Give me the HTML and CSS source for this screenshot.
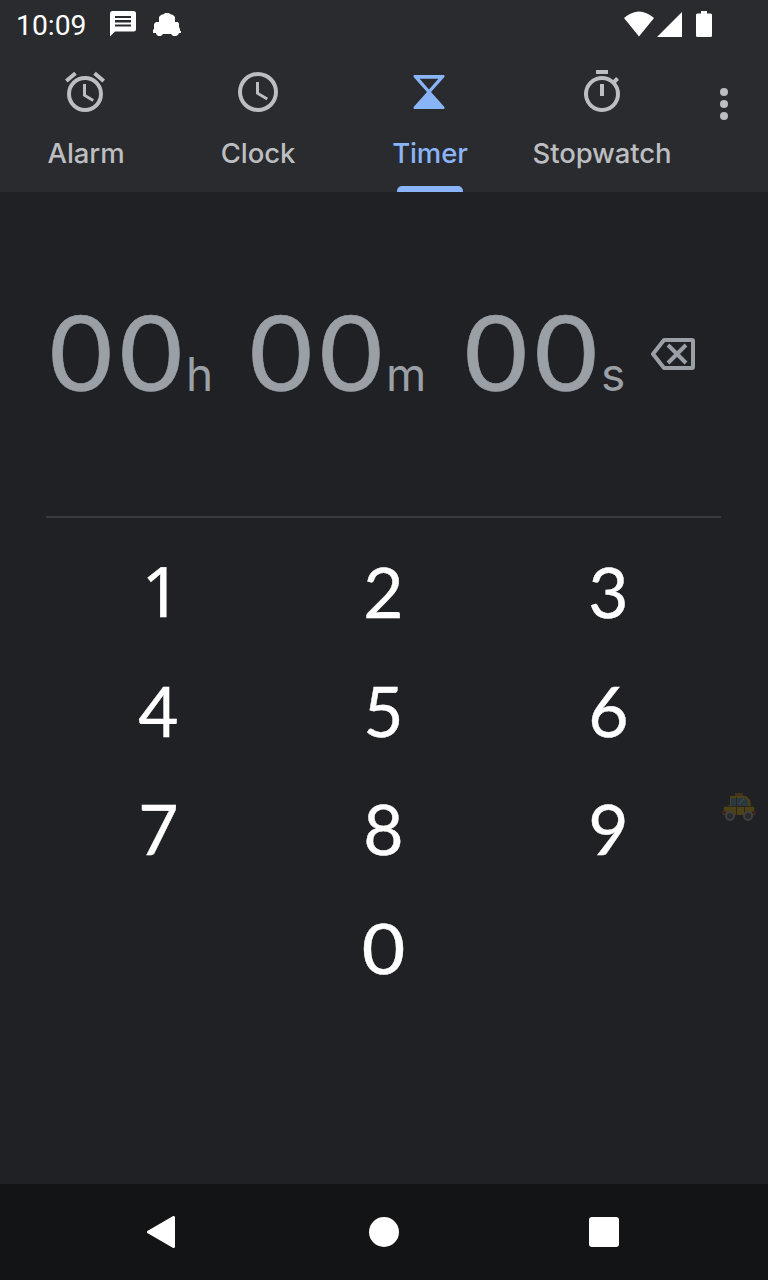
FILE: index.html
```html
<!DOCTYPE html>
<html lang="en">
<head>
<meta charset="utf-8">
<title>Clock</title>
<link rel="stylesheet" href="styles.css">
</head>
<body>
<div class="screen">
  <header class="status">
    <span class="time">10:09</span>
    <svg class="chat" width="26" height="26" viewBox="0 0 26 26"><path fill="#fff" fill-rule="evenodd" d="M2.500 0h21a2.500 2.500 0 0 1 2.500 2.500v15.500a2.500 2.500 0 0 1-2.500 2.500H5L0 25.500V2.500A2.500 2.500 0 0 1 2.500 0zM5 5v2h16V5zM5 9v2.500h16V9zM5 13.500v2h16v-2z"/></svg>
    <svg class="car" width="28" height="23" viewBox="0 0 28 23"><path fill="#fff" d="M11 1L12 0H16L17 1L20 2L22 4V9H25L26 11V14L27 16V18H28V20H26L25 22L23 23H20L18 21H10L8 23H5L3 21V20H0V17L1 16V11L3 9H6V4L8 2L11 1z"/></svg>
    <span class="grow"></span>
    <svg class="signals" width="90" height="26" viewBox="0 0 90 26" fill="#fff"><path d="M0 7Q15-6 30 7L15 25.500zM58 1v25H33zM72 4q0-1.500 1.500-1.500H77V0h6v2.500h3.500Q88 2.500 88 4v20.500q0 1.500-1.500 1.500h-13Q72 26 72 24.500z"/></svg>
  </header>
  <nav class="tabs">
    <div class="tab">
      <svg class="icon nudge" viewBox="0 0 24 24"><path d="M22 5.720l-4.600-3.860-1.290 1.530 4.600 3.860L22 5.720zM7.880 3.390L6.600 1.860 2 5.710l1.290 1.530 4.590-3.850zM12.500 8H11v6l4.750 2.850.750-1.230-4-2.370V8zM12 4a9 9 0 1 0 0 18 9 9 0 0 0 0-18zm0 16a7 7 0 1 1 0-14 7 7 0 0 1 0 14z"/></svg>
      <span class="label">Alarm</span>
    </div>
    <div class="tab">
      <svg class="icon" viewBox="0 0 24 24"><path d="M12 2a10 10 0 1 0 0 20 10 10 0 0 0 0-20zm0 18a8 8 0 1 1 0-16 8 8 0 0 1 0 16zM12.500 7H11v6l5.250 3.150.750-1.230-4.500-2.670z"/></svg>
      <span class="label">Clock</span>
    </div>
    <div class="tab active">
      <svg class="icon nudge" viewBox="0 0 24 24"><path fill-rule="evenodd" d="M4.300 3.500h15.400v1L13 12l6.700 7.500v1H4.300v-1L11 12 4.300 4.500zM7.300 5.400L12 10.700l4.700-5.300z"/></svg>
      <span class="label">Timer</span>
      <span class="indicator"></span>
    </div>
    <div class="tab">
      <svg class="icon" viewBox="0 0 24 24"><path d="M15 1H9v2h6V1zm-4 13h2V8h-2v6zm8.030-6.610l1.420-1.420c-.43-.51-.9-.99-1.410-1.410l-1.420 1.420A9 9 0 1 0 19.030 7.390zM12 20a7 7 0 1 1 0-14 7 7 0 0 1 0 14z"/></svg>
      <span class="label">Stopwatch</span>
    </div>
    <div class="more"><i></i><i></i><i></i></div>
  </nav>
  <main class="content">
    <section class="duration">
      <div class="part hours"><span class="digit">0</span><span class="digit">0</span><span class="unit">h</span></div>
      <div class="part minutes"><span class="digit">0</span><span class="digit">0</span><span class="unit">m</span></div>
      <div class="part seconds"><span class="digit">0</span><span class="digit">0</span><span class="unit">s</span></div>
      <svg class="erase" width="46" height="32" viewBox="0 0 46 32" fill="none" stroke="#9aa0a6" stroke-width="4"><path stroke-linejoin="round" d="M13 2h28a1 1 0 0 1 1 1v26a1 1 0 0 1-1 1H13L2 16z"/><path d="M17 7l18 18M35 7l-18 18"/></svg>
    </section>
    <section class="keypad">
      <span class="key one">1</span><span class="key">2</span><span class="key">3</span>
      <span class="key">4</span><span class="key">5</span><span class="key">6</span>
      <span class="key">7</span><span class="key">8</span><span class="key">9</span>
      <span class="key zero">0</span>
    </section>
  </main>
  <footer class="navbar">
    <svg width="28" height="32" viewBox="0 0 28 32"><path fill="#fff" stroke="#fff" stroke-width="3" stroke-linejoin="round" d="M1.500 16L26.500 1.500v29z"/></svg>
    <span class="home"></span>
    <span class="recent"></span>
  </footer>
  <svg class="taxi" width="34" height="28" viewBox="0 0 34 28">
    <path fill="#42331f" d="M13 0h8v3h-8z"/>
    <path fill="#4d4118" d="M8 3h16l4 4 1 6 3 1 1 8H1l1-8 6-2z"/>
    <path fill="#2a393f" d="M9 5h5v8H9zM15 5h8l3 4v4H15z"/>
    <path stroke="#3b565d" d="M17 11l5-5"/>
    <path stroke="#2b271d" d="M1 13.500h31M14.500 4v18M22.500 14v8"/>
    <path fill="#402226" d="M30 18h4v3h-4zM0 18h4v3H0z"/>
    <g fill="#292b2d" stroke="#3e4042" stroke-width="2"><circle cx="8" cy="23" r="4"/><circle cx="26" cy="23" r="4"/></g>
  </svg>
</div>
</body>
</html>
```
FILE: styles.css
```css
* { box-sizing: border-box; }
body { margin: 0; background: #202124; }
.screen {
  position: relative;
  width: 768px;
  height: 1280px;
  display: flex;
  flex-direction: column;
  overflow: hidden;
  background: #202124;
  font-family: Lato, "Open Sans", sans-serif;
}
.status {
  height: 48px;
  display: flex;
  align-items: flex-start;
  padding: 11px 54px 0 16px;
  background: #2a2b2e;
}
.time { width: 94px; font: 28.3px/29px Roboto, sans-serif; color: #fff; }
.car { margin: 2px 0 0 17px; }
.grow { flex: 1; }
.tabs { height: 144px; display: flex; background: #2a2b2e; }
.tab {
  width: 172px;
  padding-top: 20px;
  display: flex;
  flex-direction: column;
  align-items: center;
}
.icon { width: 48px; height: 48px; fill: #bdbec1; }
.nudge { margin-right: 2px; }
.label {
  margin-top: 20px;
  font-family: Inter, sans-serif;
  font-size: 27.5px;
  font-weight: 500;
  letter-spacing: -0.1px;
  line-height: 34px;
  color: #bdbec1;
}
.active .icon { fill: #8ab4f8; }
.active .label { color: #8ab4f8; }
.indicator {
  width: 66px;
  height: 6px;
  margin-top: auto;
  border-radius: 5px 5px 0 0;
  background: #8ab4f8;
}
.more {
  flex: 1;
  display: flex;
  flex-direction: column;
  align-items: center;
  gap: 4px;
  padding: 40px 8px 0 0;
}
.more i { width: 8px; height: 8px; border-radius: 50%; background: #bdbec1; }
.content { flex: 1; padding: 0 47px 0 46px; }
.duration {
  height: 326px;
  display: flex;
  align-items: flex-start;
  border-bottom: 2px solid #3a3b3f;
}
.part { display: flex; align-items: baseline; padding-top: 93px; color: #9aa0a6; }
.hours { width: 200px; }
.minutes { width: 215px; }
.seconds { width: 190px; }
.digit {
  width: 70px;
  font-size: 105px;
  line-height: 130px;
  text-align: center;
  transform: scaleX(1.04);
  -webkit-text-stroke: 0.6px currentColor;
}
.unit {
  font-family: Inter, sans-serif;
  font-size: 46px;
  font-weight: 400;
  line-height: 60px;
}
.erase { margin-top: 146px; }
.keypad {
  display: grid;
  grid-template-columns: repeat(3, 225px);
  grid-auto-rows: 118.5px;
  padding-top: 14px;
}
.key {
  font-size: 69.5px;
  line-height: 118px;
  text-align: center;
  color: #fff;
  -webkit-text-stroke: 0.4px currentColor;
}
.one {
  padding-left: 6px;
  font-family: "Noto Sans", sans-serif;
  line-height: 117px;
}
.zero { grid-column: 2; transform: scaleX(1.08); }
.navbar {
  height: 96px;
  display: flex;
  align-items: center;
  padding-left: 147px;
  background: #131416;
}
.home { width: 30px; height: 30px; margin-left: 194px; border-radius: 50%; background: #fff; }
.recent { width: 30px; height: 30px; margin-left: 190px; border-radius: 3px; background: #fff; }
.taxi { position: absolute; left: 722px; top: 793px; }
```
